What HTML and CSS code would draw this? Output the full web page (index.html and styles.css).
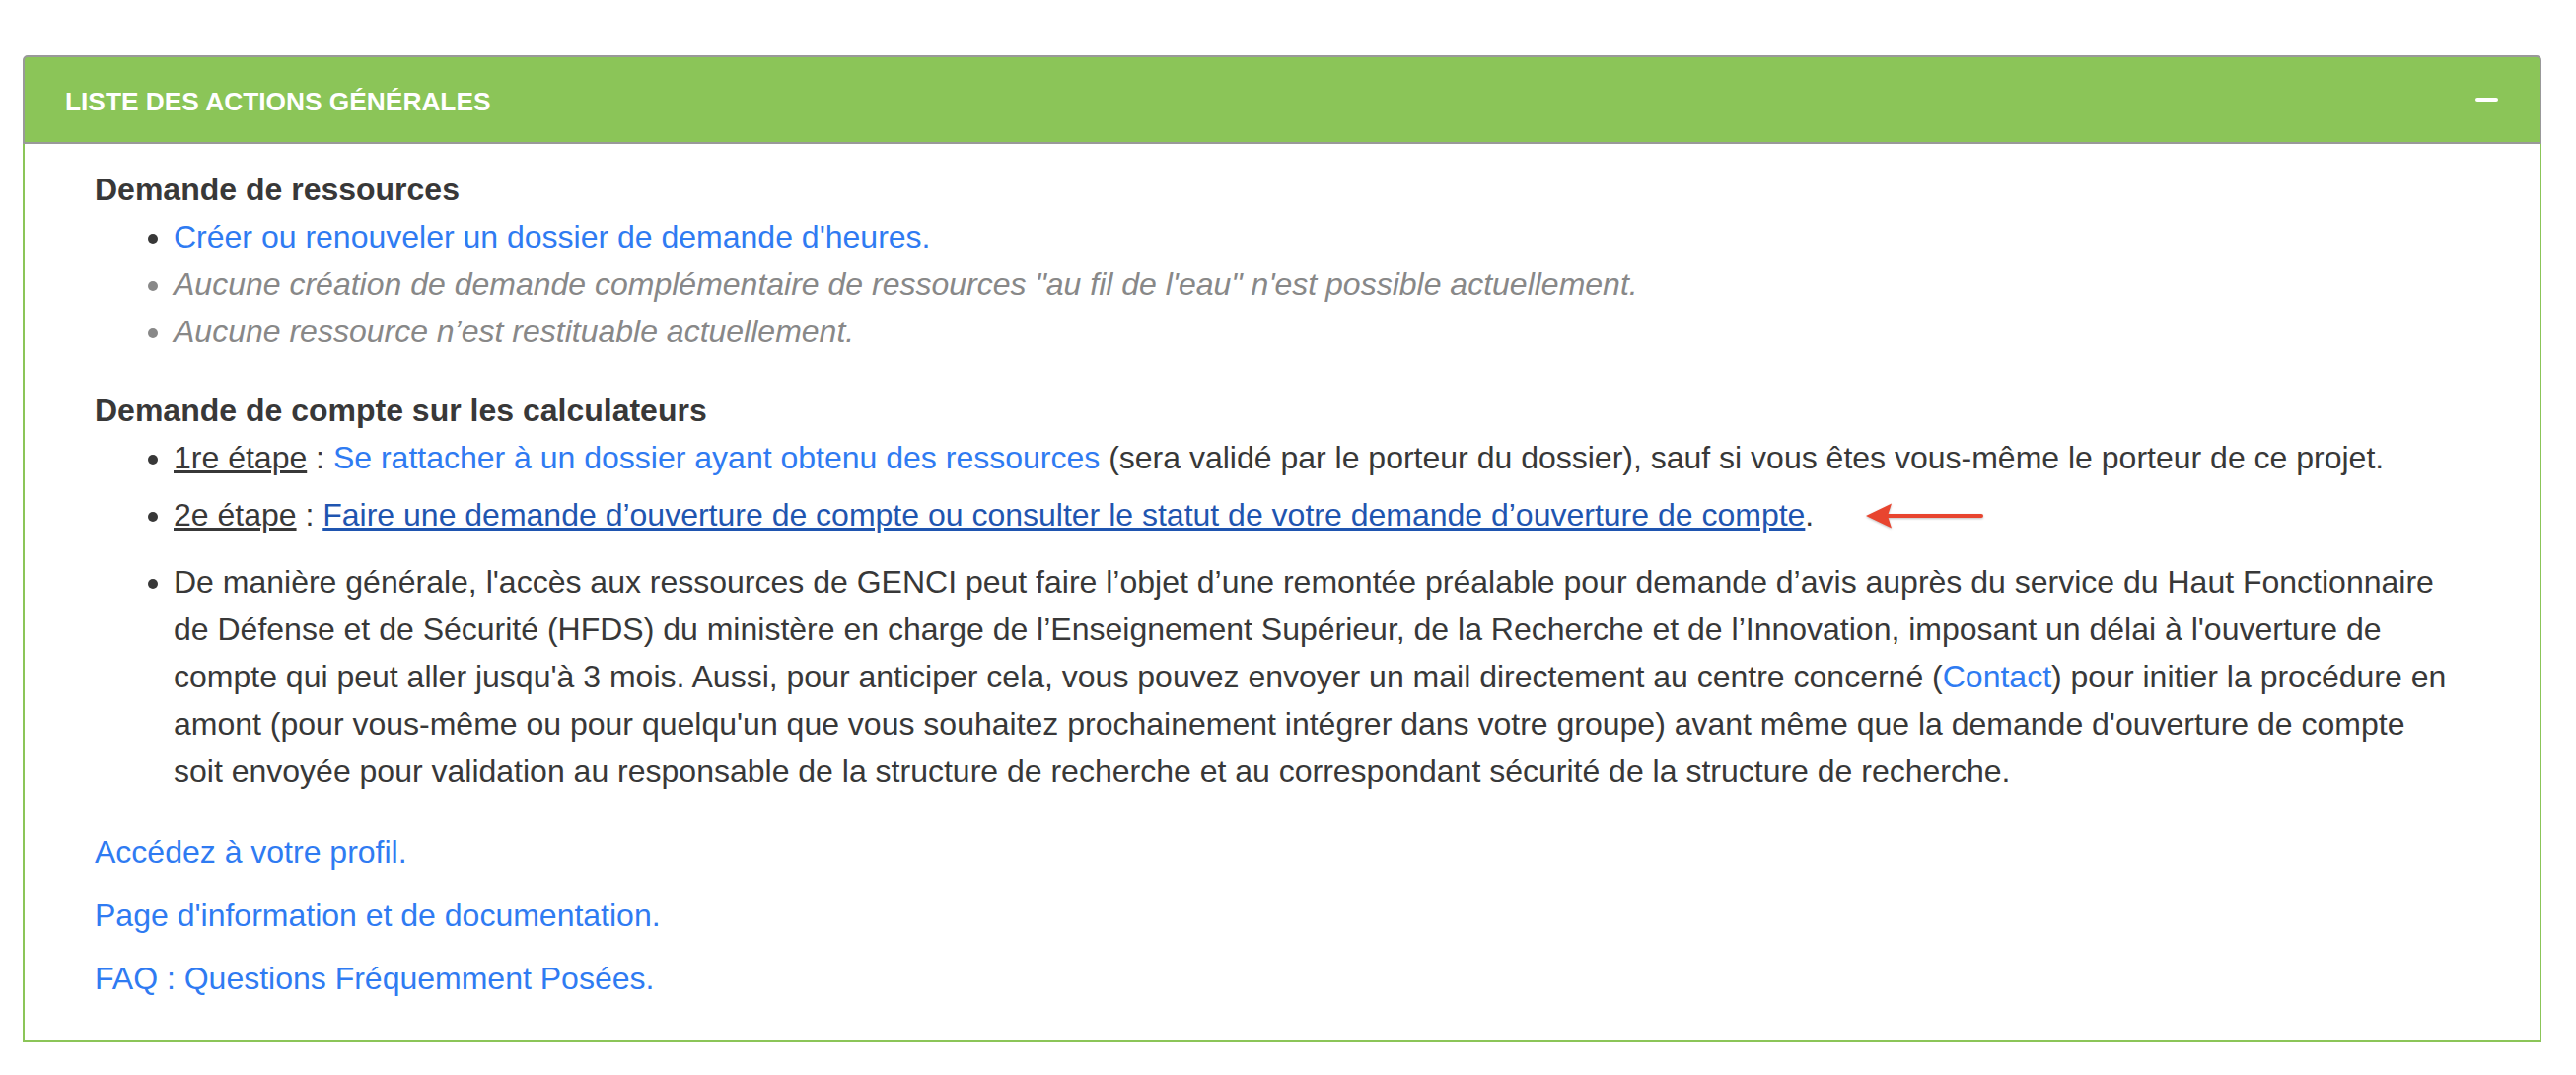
FILE: index.html
```
<!DOCTYPE html>
<html lang="fr">
<head>
<meta charset="utf-8">
<title>Liste des actions générales</title>
<link rel="stylesheet" href="styles.css">
</head>
<body>
<div class="panel">
  <div class="panel-heading">
    <h3 class="panel-title">LISTE DES ACTIONS GÉNÉRALES</h3>
    <span class="collapse-icon" aria-label="Réduire"></span>
  </div>
  <div class="panel-body">
    <h4 class="section-title">Demande de ressources</h4>
    <ul class="list list-plain">
      <li><a href="#" class="link">Créer ou renouveler un dossier de demande d'heures.</a></li>
      <li class="muted">Aucune création de demande complémentaire de ressources "au fil de l'eau" n'est possible actuellement.</li>
      <li class="muted">Aucune ressource n’est restituable actuellement.</li>
    </ul>
    <h4 class="section-title">Demande de compte sur les calculateurs</h4>
    <ul class="list list-spaced">
      <li><u>1re étape</u> : <a href="#" class="link">Se rattacher à un dossier ayant obtenu des ressources</a> (sera validé par le porteur du dossier), sauf si vous êtes vous-même le porteur de ce projet.</li>
      <li class="with-arrow"><u>2e étape</u> : <a href="#" class="link link-visited">Faire une demande d’ouverture de compte ou consulter le statut de votre demande d’ouverture de compte</a>.<svg class="arrow" width="122" height="28" viewBox="0 0 122 28" aria-hidden="true"><path d="M1 14 L27 1.5 L23 14 L27 26.5 Z" fill="#e8452f"/><rect x="20" y="12" width="100" height="4" rx="2" fill="#e8452f"/></svg></li>
      <li>De manière générale, l'accès aux ressources de GENCI peut faire l’objet d’une remontée préalable pour demande d’avis auprès du service du Haut Fonctionnaire de Défense et de Sécurité (HFDS) du ministère en charge de l’Enseignement Supérieur, de la Recherche et de l’Innovation, imposant un délai à l'ouverture de compte qui peut aller jusqu'à 3 mois. Aussi, pour anticiper cela, vous pouvez envoyer un mail directement au centre concerné (<a href="#" class="link">Contact</a>) pour initier la procédure en amont (pour vous-même ou pour quelqu'un que vous souhaitez prochainement intégrer dans votre groupe) avant même que la demande d'ouverture de compte soit envoyée pour validation au responsable de la structure de recherche et au correspondant sécurité de la structure de recherche.</li>
    </ul>
    <p class="para"><a href="#" class="link">Accédez à votre profil.</a></p>
    <p class="para"><a href="#" class="link">Page d'information et de documentation.</a></p>
    <p class="para"><a href="#" class="link">FAQ : Questions Fréquemment Posées.</a></p>
  </div>
</div>
</body>
</html>
```
FILE: styles.css
```
html, body {
  margin: 0;
  padding: 0;
  background: #ffffff;
}

body {
  font-family: "Liberation Sans", Arial, Helvetica, sans-serif;
  font-size: 32px;
  line-height: 48px;
  color: #383838;
}

.panel {
  margin: 56px 0 0 23px;
  width: 2554px;
}

.panel-heading {
  box-sizing: border-box;
  height: 90px;
  display: flex;
  align-items: center;
  justify-content: space-between;
  padding: 4px 42px 0 41px;
  background: #8bc558;
  border: 2px solid #999999;
  border-radius: 5px 5px 0 0;
}

.panel-title {
  margin: 0;
  font-size: 26.3px;
  line-height: normal;
  font-weight: bold;
  color: #ffffff;
}

.collapse-icon {
  display: block;
  width: 23px;
  height: 4px;
  margin-top: -4px;
  border-radius: 2px;
  background: #ffffff;
}

.panel-body {
  border: 2px solid #8bc558;
  border-top: none;
  padding: 22px 90px 23px 71px;
}

.section-title {
  margin: 0;
  font-size: 32px;
  line-height: 48px;
  font-weight: bold;
  color: #383838;
}

.list {
  margin: 0;
  padding-left: 80px;
}

.list-plain {
  margin-bottom: 32px;
}

.list-spaced {
  margin-bottom: 34px;
}

.list-spaced li {
  margin-bottom: 10px;
}

.list-spaced li.with-arrow {
  margin-bottom: 20px;
}

.muted {
  color: #888888;
  font-style: italic;
}

.link {
  color: #2f7bf2;
  text-decoration: none;
}

.link-visited {
  color: #1f55b0;
  text-decoration: underline;
}

u {
  text-decoration: underline;
}

.arrow {
  vertical-align: middle;
  margin-left: 52px;
  position: relative;
  top: -2px;
  filter: drop-shadow(0 1px 1px rgba(0, 0, 0, 0.25));
}

.para {
  margin: 0 0 16px;
}
```
